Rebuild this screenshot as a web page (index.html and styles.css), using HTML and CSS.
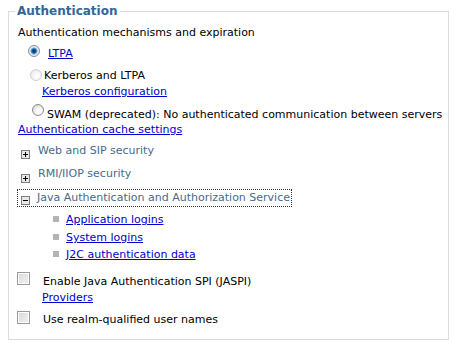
FILE: index.html
```html
<!DOCTYPE html>
<html lang="en">
<head>
    <meta charset="UTF-8">
    <title>Authentication</title>
    <link rel="stylesheet" href="styles.css">
</head>
<body>
    <fieldset class="auth">
        <legend>Authentication</legend>

        <!-- Mechanisms -->
        <div class="row intro">Authentication mechanisms and expiration</div>
        <div class="row opt-ltpa"><span class="radio checked"></span><a href="#">LTPA</a></div>
        <div class="row opt-kerb"><span class="radio disabled"></span><span>Kerberos and LTPA</span></div>
        <div class="row sublink"><a href="#">Kerberos configuration</a></div>
        <div class="row opt-swam"><span class="radio"></span><span>SWAM (deprecated): No authenticated communication between servers</span></div>
        <div class="row cache"><a href="#">Authentication cache settings</a></div>

        <!-- Sections -->
        <div class="row section sec-web">
            <svg class="toggle" width="9" height="9" viewBox="0 0 9 9"><rect x="0.5" y="0.5" width="8" height="8" fill="#e8e8e8" stroke="#7f7f7f"/><path d="M2 4.5h5M4.5 2v5" stroke="#000"/></svg>
            <span>Web and SIP security</span>
        </div>
        <div class="row section sec-rmi">
            <svg class="toggle" width="9" height="9" viewBox="0 0 9 9"><rect x="0.5" y="0.5" width="8" height="8" fill="#e8e8e8" stroke="#7f7f7f"/><path d="M2 4.5h5M4.5 2v5" stroke="#000"/></svg>
            <span>RMI/IIOP security</span>
        </div>
        <div class="section sec-java">
            <svg class="toggle" width="9" height="9" viewBox="0 0 9 9"><rect x="0.5" y="0.5" width="8" height="8" fill="#e8e8e8" stroke="#7f7f7f"/><path d="M2 4.5h5" stroke="#000"/></svg>
            <span>Java Authentication and Authorization Service</span>
        </div>
        <ul class="jaas">
            <li class="row"><span class="bullet"></span><a href="#">Application logins</a></li>
            <li class="row"><span class="bullet"></span><a href="#">System logins</a></li>
            <li class="row"><span class="bullet"></span><a href="#">J2C authentication data</a></li>
        </ul>

        <!-- Options -->
        <div class="row check-jaspi"><span class="checkbox"></span><span>Enable Java Authentication SPI (JASPI)</span></div>
        <div class="row providers"><a href="#">Providers</a></div>
        <div class="row check-realm"><span class="checkbox"></span><span>Use realm-qualified user names</span></div>
    </fieldset>
</body>
</html>
```

FILE: styles.css
```css
* {
    box-sizing: border-box;
}

body {
    margin: 0;
    background: #fff;
    color: #000;
    font-family: "DejaVu Sans", Verdana, sans-serif;
    font-size: 11px;
}

a {
    color: #0000cc;
    text-decoration: underline;
}

.auth {
    margin: 4px 11px 0 8px;
    padding: 8px 0 12px 9px;
    border: 1px solid #dcdcdc;
    min-width: 0;
}

.auth legend {
    margin-left: -3px;
    padding: 0 2px;
    font-size: 12px;
    font-weight: bold;
    line-height: 14px;
    color: #336699;
}

.row {
    display: flex;
    align-items: flex-start;
    height: 14px;
    line-height: 14px;
    white-space: nowrap;
}

/* Radio buttons */
.radio {
    flex: none;
    width: 12px;
    height: 12px;
    border-radius: 50%;
    border: 1px solid #8c8c8c;
    background: radial-gradient(circle at 60% 65%, #fff 0, #f6f6f6 35%, #cfcfcf 100%);
}

.radio.checked {
    background: radial-gradient(circle, #0b3a63 0, #0b3a63 1.2px, #2f7fc2 2.4px, #8ec0ea 3.4px, #f4f4f4 4px, #d2d2d2 100%);
}

.radio.disabled {
    border-color: #d0d0d0;
    background: radial-gradient(circle at 60% 65%, #fff 0, #f7f7f7 40%, #e2e2e2 100%);
}

.opt-ltpa {
    margin-top: 7px;
}

.opt-ltpa .radio {
    margin: -2px 8px 0 10px;
}

.opt-kerb {
    margin-top: 8px;
}

.opt-kerb .radio {
    margin: 0 2px 0 12px;
}

.sublink {
    margin-top: 2px;
    padding-left: 24px;
}

.opt-swam {
    margin-top: 9px;
}

.opt-swam .radio {
    margin: -4px 3px 0 14px;
}

.cache {
    margin-top: 1px;
}

/* Collapsible sections */
.section {
    color: #476a8d;
}

.toggle {
    flex: none;
    margin: 6px 8px 0 3px;
}

.sec-web {
    margin-top: 7px;
}

.sec-rmi {
    margin-top: 9px;
}

.sec-rmi .toggle {
    margin-top: 7px;
}

.sec-java {
    display: inline-flex;
    align-items: flex-start;
    height: 18px;
    line-height: 16px;
    margin: 8px 0 0 -1px;
    padding-right: 1px;
    border: 1px dotted #333;
    white-space: nowrap;
}

.sec-java .toggle {
    margin: 6px 7px 0 3px;
}

.jaas {
    margin: 5px 0 0;
    padding: 0 0 0 35px;
    list-style: none;
}

.jaas li + li {
    margin-top: 4px;
}

.jaas li:last-child {
    margin-top: 3px;
}

.bullet {
    flex: none;
    width: 6px;
    height: 6px;
    margin: 3px 7px 0 0;
    background: #b4b4b4;
}

/* Checkboxes */
.checkbox {
    flex: none;
    width: 13px;
    height: 13px;
    margin: -3px 13px 0 -1px;
    border: 1px solid #9a9a9a;
    box-shadow: inset 0 0 0 1px #fff;
    background: linear-gradient(135deg, #d8d8d8, #f2f2f2);
}

.check-jaspi {
    margin-top: 13px;
}

.providers {
    margin-top: 2px;
    padding-left: 24px;
}

.check-realm {
    margin-top: 8px;
}

.check-realm .checkbox {
    margin-top: -2px;
}
```
